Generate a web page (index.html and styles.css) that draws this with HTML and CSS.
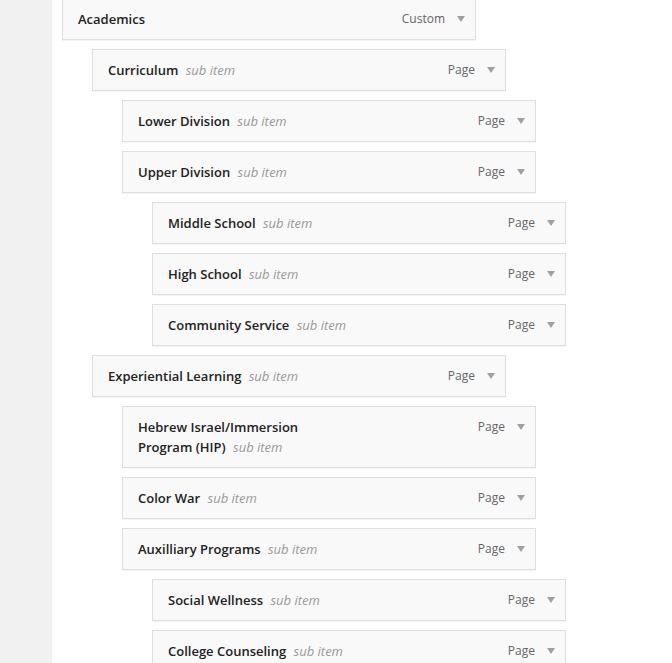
FILE: index.html
```html
<!DOCTYPE html>
<html lang="en">
<head>
  <meta charset="UTF-8" />
  <meta name="viewport" content="width=device-width, initial-scale=1.0"/>
  <title>Menus</title>
  <link rel="stylesheet" href="styles.css">
</head>
<body>

  <div class="sidebar"></div>

  <main class="menu-area">
    <ul class="menu">
      <li class="menu-item depth-0">
        <div class="item-handle">
          <span class="item-title">Academics</span>
          <span class="item-controls"><span class="item-type">Custom</span><span class="item-edit"></span></span>
        </div>
      </li>
      <li class="menu-item depth-1">
        <div class="item-handle">
          <span class="item-title">Curriculum <span class="is-submenu">sub item</span></span>
          <span class="item-controls"><span class="item-type">Page</span><span class="item-edit"></span></span>
        </div>
      </li>
      <li class="menu-item depth-2">
        <div class="item-handle">
          <span class="item-title">Lower Division <span class="is-submenu">sub item</span></span>
          <span class="item-controls"><span class="item-type">Page</span><span class="item-edit"></span></span>
        </div>
      </li>
      <li class="menu-item depth-2">
        <div class="item-handle">
          <span class="item-title">Upper Division <span class="is-submenu">sub item</span></span>
          <span class="item-controls"><span class="item-type">Page</span><span class="item-edit"></span></span>
        </div>
      </li>
      <li class="menu-item depth-3">
        <div class="item-handle">
          <span class="item-title">Middle School <span class="is-submenu">sub item</span></span>
          <span class="item-controls"><span class="item-type">Page</span><span class="item-edit"></span></span>
        </div>
      </li>
      <li class="menu-item depth-3">
        <div class="item-handle">
          <span class="item-title">High School <span class="is-submenu">sub item</span></span>
          <span class="item-controls"><span class="item-type">Page</span><span class="item-edit"></span></span>
        </div>
      </li>
      <li class="menu-item depth-3">
        <div class="item-handle">
          <span class="item-title">Community Service <span class="is-submenu">sub item</span></span>
          <span class="item-controls"><span class="item-type">Page</span><span class="item-edit"></span></span>
        </div>
      </li>
      <li class="menu-item depth-1">
        <div class="item-handle">
          <span class="item-title">Experiential Learning <span class="is-submenu">sub item</span></span>
          <span class="item-controls"><span class="item-type">Page</span><span class="item-edit"></span></span>
        </div>
      </li>
      <li class="menu-item depth-2">
        <div class="item-handle">
          <span class="item-title">Hebrew Israel/Immersion Program (HIP) <span class="is-submenu">sub item</span></span>
          <span class="item-controls"><span class="item-type">Page</span><span class="item-edit"></span></span>
        </div>
      </li>
      <li class="menu-item depth-2">
        <div class="item-handle">
          <span class="item-title">Color War <span class="is-submenu">sub item</span></span>
          <span class="item-controls"><span class="item-type">Page</span><span class="item-edit"></span></span>
        </div>
      </li>
      <li class="menu-item depth-2">
        <div class="item-handle">
          <span class="item-title">Auxilliary Programs <span class="is-submenu">sub item</span></span>
          <span class="item-controls"><span class="item-type">Page</span><span class="item-edit"></span></span>
        </div>
      </li>
      <li class="menu-item depth-3">
        <div class="item-handle">
          <span class="item-title">Social Wellness <span class="is-submenu">sub item</span></span>
          <span class="item-controls"><span class="item-type">Page</span><span class="item-edit"></span></span>
        </div>
      </li>
      <li class="menu-item depth-3">
        <div class="item-handle">
          <span class="item-title">College Counseling <span class="is-submenu">sub item</span></span>
          <span class="item-controls"><span class="item-type">Page</span><span class="item-edit"></span></span>
        </div>
      </li>
    </ul>
  </main>

</body>
</html>
```

FILE: styles.css
```css
html, body {
  height: 100%;
}

body {
  margin: 0;
  padding: 0;
  display: flex;
  background-color: #fff;
  font-family: "Open Sans", sans-serif;
  font-size: 13px;
  color: #222;
  overflow: hidden;
}

.sidebar {
  width: 52px;
  flex-shrink: 0;
  background-color: #f1f1f1;
}

.menu-area {
  padding-left: 10px;
}

.menu {
  list-style: none;
  margin: -2px 0 0;
  padding: 0;
}

.menu-item {
  margin-bottom: 9px;
}

.depth-1 { margin-left: 30px; }
.depth-2 { margin-left: 60px; }
.depth-3 { margin-left: 90px; }

.item-handle {
  box-sizing: border-box;
  width: 414px;
  display: flex;
  justify-content: space-between;
  align-items: flex-start;
  padding: 10px 10px 10px 15px;
  border: 1px solid #dfdfdf;
  background-color: #f9f9f9;
  box-shadow: 0 1px 1px rgba(0, 0, 0, 0.04);
  line-height: 20px;
}

.item-title {
  max-width: 213px;
  font-weight: 600;
  color: #222;
}

.is-submenu {
  margin-left: 4px;
  font-style: italic;
  font-weight: normal;
  color: #999;
}

.item-controls {
  display: flex;
  align-items: center;
  height: 20px;
}

.item-type {
  font-size: 12px;
  color: #666;
}

.item-edit {
  width: 0;
  height: 0;
  margin-left: 12px;
  border-left: 4px solid transparent;
  border-right: 4px solid transparent;
  border-top: 6px solid #a0a0a0;
}
```
